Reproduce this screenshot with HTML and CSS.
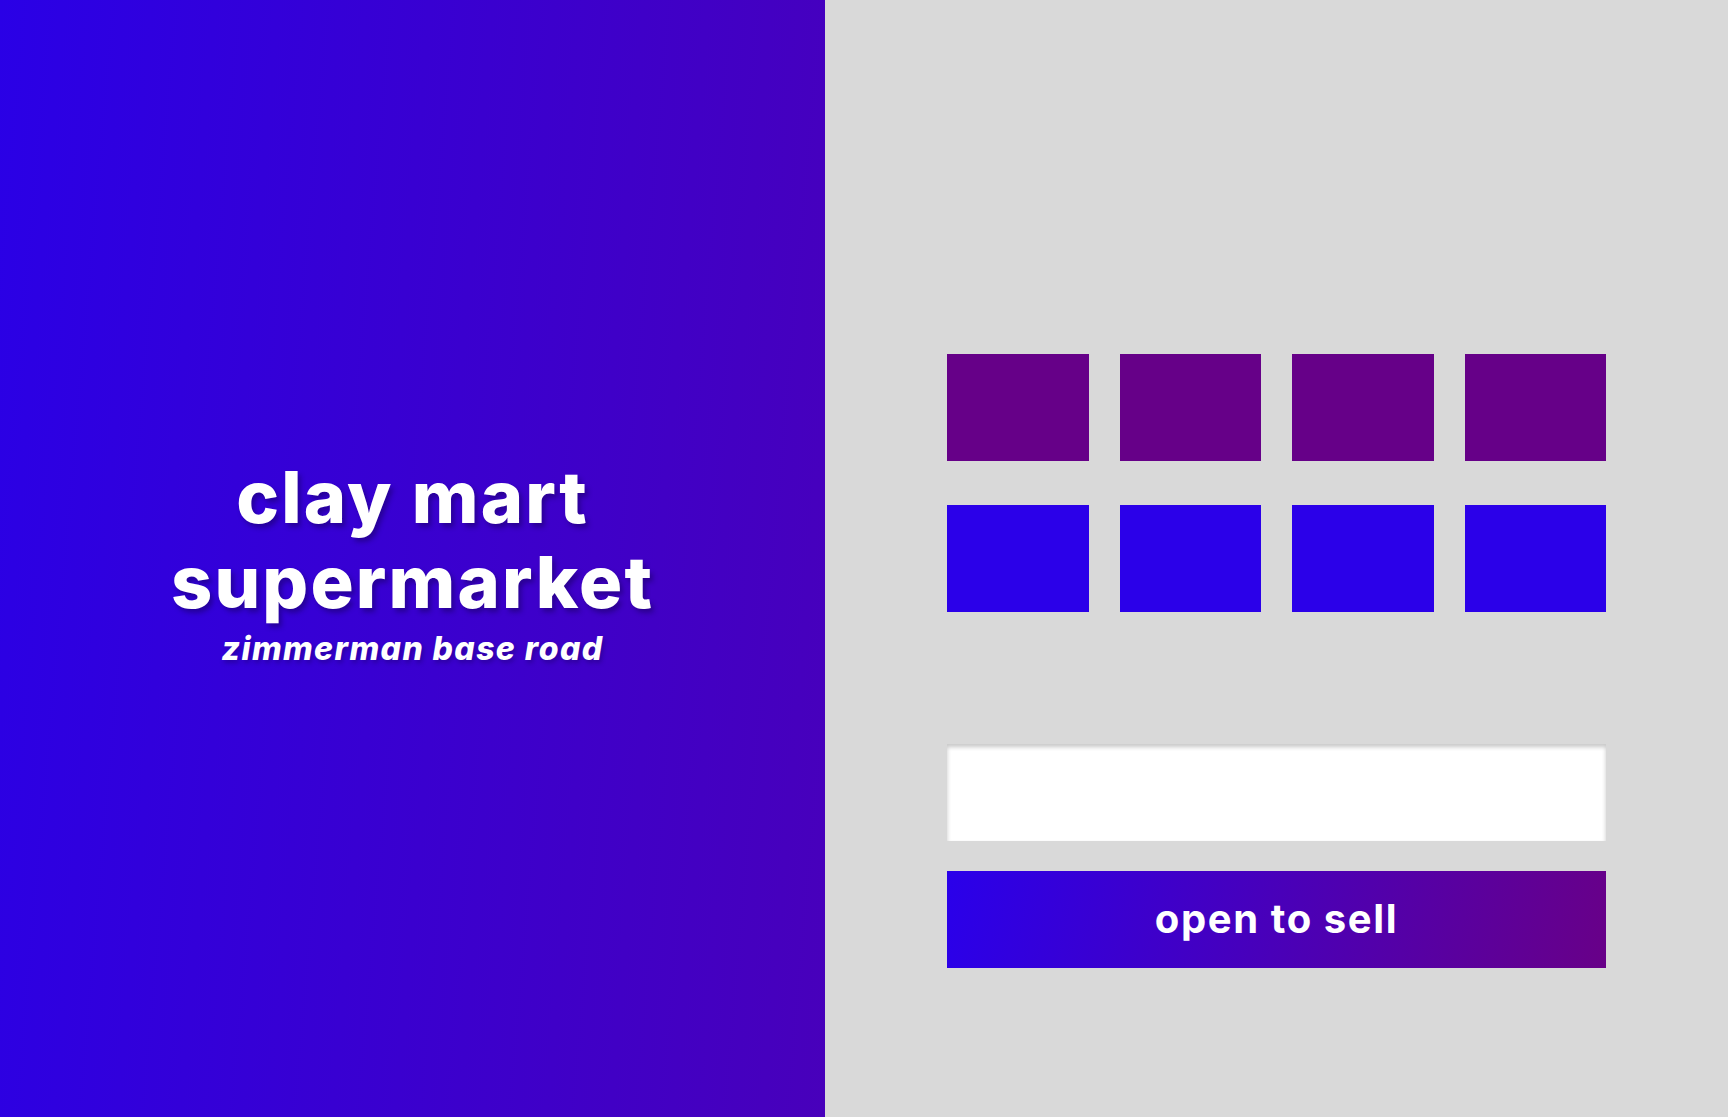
FILE: index.html
```html
<!DOCTYPE html>
<html lang="en">
<head>
<meta charset="utf-8">
<title>clay mart supermarket</title>
<link rel="stylesheet" href="styles.css">
</head>
<body>
<div class="page">
  <section class="brand">
    <div class="brand-text">
      <h1 class="title">clay mart<br>supermarket</h1>
      <p class="subtitle">zimmerman base road</p>
    </div>
  </section>
  <section class="panel">
    <div class="tiles">
      <div class="tile tile-purple"></div>
      <div class="tile tile-purple"></div>
      <div class="tile tile-purple"></div>
      <div class="tile tile-purple"></div>
      <div class="tile tile-blue"></div>
      <div class="tile tile-blue"></div>
      <div class="tile tile-blue"></div>
      <div class="tile tile-blue"></div>
    </div>
    <input class="field" type="text" aria-label="amount">
    <button class="open-btn" type="button">open to sell</button>
  </section>
</div>
</body>
</html>
```
FILE: styles.css
```css
* { box-sizing: border-box; }
html, body { margin: 0; padding: 0; }
body {
  width: 1728px;
  height: 1117px;
  overflow: hidden;
  font-family: "Inter", "Liberation Sans", sans-serif;
  background: #d9d9d9;
}
.page {
  display: flex;
  width: 1728px;
  height: 1117px;
}
.brand {
  width: 825px;
  flex: 0 0 825px;
  height: 100%;
  background: linear-gradient(95deg, #2a00e6 0%, #4800bb 100%);
  display: flex;
  align-items: center;
  justify-content: center;
  padding-top: 4px;
}
.brand-text {
  text-align: center;
  color: #fff;
}
.title {
  margin: 0;
  font-size: 72px;
  font-weight: 800;
  line-height: 85px;
  letter-spacing: 2.2px;
  text-shadow: 3px 4px 5px rgba(20, 0, 80, 0.45);
}
.subtitle {
  margin: 5px 0 0;
  font-size: 32px;
  font-weight: 800;
  font-style: italic;
  letter-spacing: 1.4px;
  text-shadow: 2px 3px 4px rgba(20, 0, 80, 0.35);
}
.panel {
  flex: 1 1 auto;
  background: #d9d9d9;
  display: flex;
  flex-direction: column;
  align-items: center;
  padding-top: 354px;
}
.tiles {
  width: 659px;
  display: grid;
  grid-template-columns: repeat(4, 1fr);
  grid-auto-rows: 107px;
  column-gap: 31px;
  row-gap: 44px;
}
.tile-purple { background: #660088; }
.tile-blue { background: #2b00e9; }
.field {
  display: block;
  width: 659px;
  height: 97px;
  margin-top: 132px;
  border: none;
  outline: none;
  background: #fff;
  box-shadow: inset 0 3px 4px rgba(0, 0, 0, 0.22);
}
.open-btn {
  display: flex;
  align-items: center;
  justify-content: center;
  width: 659px;
  height: 97px;
  margin-top: 30px;
  border: none;
  background: linear-gradient(100deg, #2a00ea 0%, #680088 100%);
  color: #fff;
  font-family: "Inter", "Liberation Sans", sans-serif;
  font-size: 40px;
  font-weight: 700;
  letter-spacing: 1.6px;
  padding: 0 0 2px;
}
```
